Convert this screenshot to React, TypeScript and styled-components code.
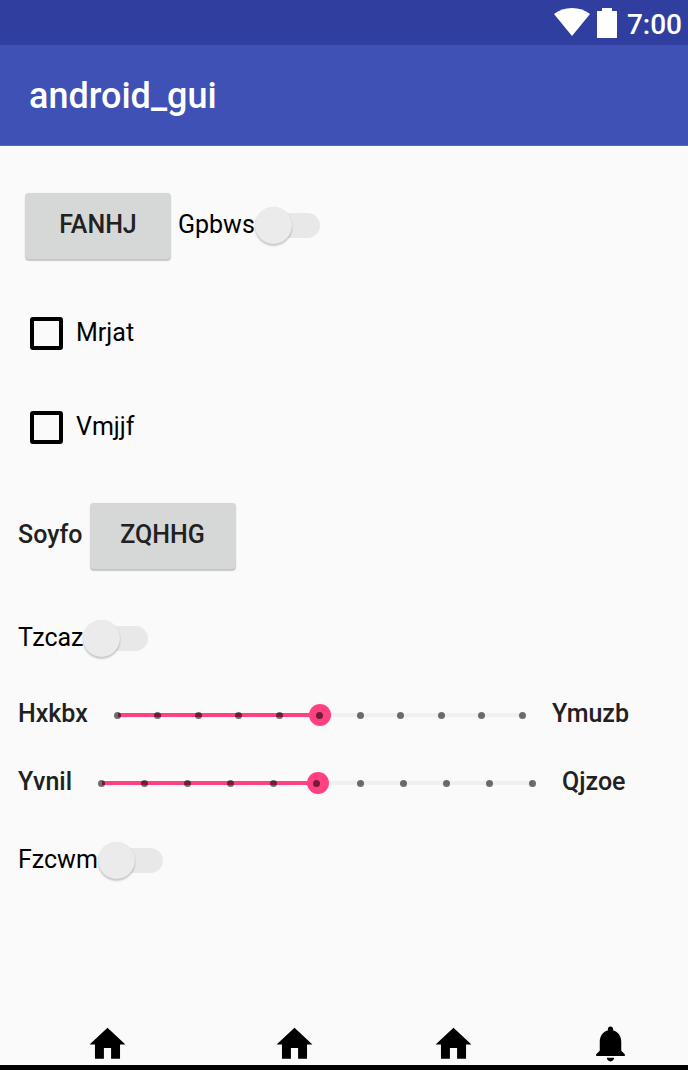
import React, { useState } from "react";
import styled, { createGlobalStyle } from "styled-components";

const GlobalStyle = createGlobalStyle`
  * { box-sizing: border-box; }
  body {
    margin: 0;
    background: #fafafa;
    font-family: Roboto, "Liberation Sans", sans-serif;
    font-size: 25px;
    line-height: 32px;
    color: #000;
  }
  button, input { font: inherit; margin: 0; }
`;

const Screen = styled.div`
  display: flex;
  flex-direction: column;
  min-height: 100vh;
`;

const StatusBar = styled.div`
  display: flex;
  align-items: center;
  justify-content: flex-end;
  height: 45px;
  padding: 0 6px 0 0;
  background: #303f9f;
  color: #fff;
`;

const StatusIcon = styled.svg`
  display: block;
  margin-right: 7px;
  fill: #fff;
`;

const Clock = styled.span`
  margin-left: 3px;
  padding-top: 4px;
  font-size: 28px;
  font-weight: 500;
`;

const AppBar = styled.header`
  display: flex;
  align-items: center;
  height: 101px;
  padding: 2px 29px 0;
  background: #3f51b5;
  border-bottom: 1px solid #5566be;
`;

const Title = styled.h1`
  margin: 0;
  font-size: 36px;
  font-weight: 500;
  line-height: 44px;
  color: #fff;
`;

const Content = styled.main`
  display: flex;
  flex-direction: column;
  flex: 1;
  padding: 36px 59px 36px 18px;
`;

const Row = styled.div<{ $height: number }>`
  display: flex;
  align-items: center;
  height: ${(p) => p.$height}px;
`;

const Group = styled.div`
  padding-top: 17px;
`;

const RaisedButton = styled.button`
  width: 146px;
  height: 66px;
  margin: 0 7px;
  padding: 0 0 2px;
  border: 0;
  border-radius: 4px;
  background: #d6d7d7;
  box-shadow: 0 2px 1px rgba(0, 0, 0, 0.2), 0 0 1px rgba(0, 0, 0, 0.12);
  font-weight: 500;
  color: #212121;
`;

const CheckLabel = styled.label`
  display: flex;
  align-items: center;
  gap: 13px;
  padding: 0 0 2px 12px;
`;

const CheckInput = styled.input`
  appearance: none;
  width: 33px;
  height: 33px;
  border: 4px solid #000;
  border-radius: 3px;
  &:checked { background: #ff4081; }
`;

const Caption = styled.span`
  font-weight: 500;
  color: #212121;
  padding-bottom: 2px;
`;

const EndCaption = styled(Caption)`
  min-width: 67px;
`;

const SwitchLabel = styled.label`
  display: flex;
  align-items: center;
  padding-bottom: 2px;
`;

const SwitchInput = styled.input`
  appearance: none;
  display: flex;
  align-items: center;
  width: 65px;
  height: 37px;
  position: relative;
  &::before {
    content: "";
    flex: 1;
    height: 25px;
    margin-left: 9px;
    border-radius: 13px;
    background: #e8e8e8;
  }
  &::after {
    content: "";
    position: absolute;
    left: 0;
    width: 37px;
    height: 37px;
    border-radius: 50%;
    background: #ebebeb;
    box-shadow: 0 2px 2px rgba(0, 0, 0, 0.2), 0 0 1px rgba(0, 0, 0, 0.1);
  }
  &:checked::before { background: #ff9fc0; }
  &:checked::after { left: 28px; background: #ff4081; }
`;

const SliderBox = styled.div`
  position: relative;
  display: flex;
  flex: 1;
  min-width: 0;
  margin: 0 18px 0 19px;
`;

const Range = styled.input`
  appearance: none;
  width: 100%;
  height: 22px;
  background: linear-gradient(#f0f0f0, #f0f0f0) center / calc(100% - 22px) 4px no-repeat;
  &::-webkit-slider-thumb {
    appearance: none;
    width: 22px;
    height: 22px;
    border-radius: 50%;
    background: #ff4081;
  }
`;

const Fill = styled.span`
  position: absolute;
  left: 11px;
  top: 9px;
  height: 4px;
  background: #ff4081;
  pointer-events: none;
`;

const Ticks = styled.span`
  position: absolute;
  inset: 0 8px 0 7px;
  display: flex;
  align-items: center;
  justify-content: space-between;
  pointer-events: none;
`;

const Tick = styled.i`
  width: 7px;
  height: 7px;
  border-radius: 50%;
  background: rgba(0, 0, 0, 0.56);
`;

const BottomNav = styled.nav`
  display: grid;
  grid-template-columns: 215fr 158fr 160fr 155fr;
  border-bottom: 5px solid #000;
`;

const NavButton = styled.button`
  display: flex;
  justify-content: center;
  padding: 0;
  border: 0;
  background: none;
  color: #000;
`;

const NavIcon = styled.svg`
  display: block;
  width: 43px;
  height: 43px;
  fill: currentColor;
`;

const HOME = "M10 20.5v-6h4v6h5v-8h3L12 3.2 2 12.5h3v8z";
const BELL =
  "M12 22c1.1 0 2-.9 2-2h-4c0 1.1.89 2 2 2zm6-6v-5c0-3.07-1.64-5.64-4.5-6.32V4c0-.83-.67-1.5-1.5-1.5s-1.5.67-1.5 1.5v.68C7.63 5.36 6 7.92 6 11v5l-2 2v1h16v-1l-2-2z";

function Switch({ label }: { label: string }) {
  return (
    <SwitchLabel>
      {label}
      <SwitchInput type="checkbox" role="switch" />
    </SwitchLabel>
  );
}

function Checkbox({ label }: { label: string }) {
  return (
    <Row $height={94}>
      <CheckLabel>
        <CheckInput type="checkbox" />
        {label}
      </CheckLabel>
    </Row>
  );
}

function SliderRow({ id, start, end }: { id: string; start: string; end: string }) {
  const [value, setValue] = useState(5);
  return (
    <Row $height={68}>
      <Caption as="label" htmlFor={id}>{start}</Caption>
      <SliderBox>
        <Range
          id={id}
          type="range"
          min={0}
          max={10}
          value={value}
          onChange={(e) => setValue(Number(e.target.value))}
        />
        <Fill style={{ width: `calc((100% - 22px) * ${value / 10})` }} />
        <Ticks>
          {Array.from({ length: 11 }, (_, i) => (
            <Tick key={i} />
          ))}
        </Ticks>
      </SliderBox>
      <EndCaption>{end}</EndCaption>
    </Row>
  );
}

export default function App() {
  return (
    <Screen>
      <GlobalStyle />
      <StatusBar>
        <StatusIcon width="36" height="30" viewBox="0 0 36 30" aria-hidden="true">
          <path d="M18 28 0 6C5 2 11 0 18 0s13 2 18 6z" />
        </StatusIcon>
        <StatusIcon width="20" height="30" viewBox="0 0 20 30" aria-hidden="true">
          <path d="M5 0h10v3h5v27H0V3h5z" />
        </StatusIcon>
        <Clock>7:00</Clock>
      </StatusBar>
      <AppBar>
        <Title>android_gui</Title>
      </AppBar>
      <Content>
        <Row $height={88}>
          <RaisedButton type="button">FANHJ</RaisedButton>
          <Switch label="Gpbws" />
        </Row>
        <Group>
          <Checkbox label="Mrjat" />
          <Checkbox label="Vmjjf" />
        </Group>
        <Group>
          <Row $height={88}>
            <Caption>Soyfo</Caption>
            <RaisedButton type="button">ZQHHG</RaisedButton>
          </Row>
        </Group>
        <Group>
          <Row $height={84}>
            <Switch label="Tzcaz" />
          </Row>
        </Group>
        <SliderRow id="hxkbx" start="Hxkbx" end="Ymuzb" />
        <SliderRow id="yvnil" start="Yvnil" end="Qjzoe" />
        <Row $height={88}>
          <Switch label="Fzcwm" />
        </Row>
      </Content>
      <BottomNav>
        {[HOME, HOME, HOME, BELL].map((d, i) => (
          <NavButton key={i} type="button" aria-label={d === BELL ? "Notifications" : "Home"}>
            <NavIcon viewBox="0 0 24 24" aria-hidden="true">
              <path d={d} />
            </NavIcon>
          </NavButton>
        ))}
      </BottomNav>
    </Screen>
  );
}
